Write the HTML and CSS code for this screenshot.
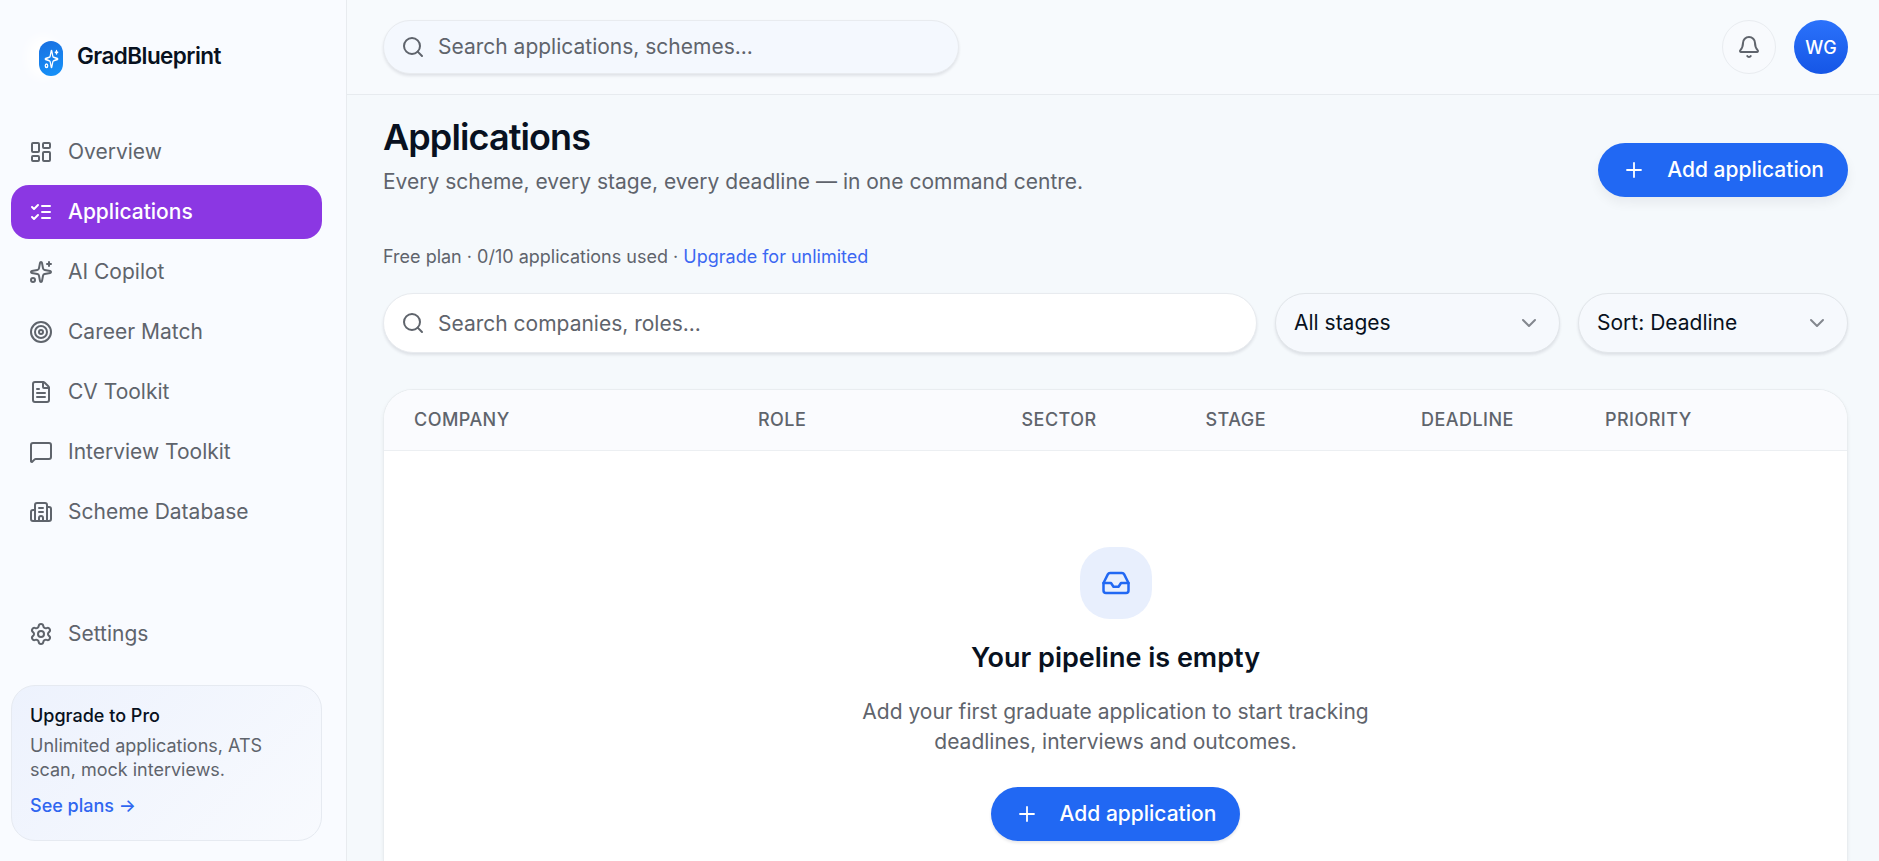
FILE: index.html
```html
<!DOCTYPE html>
<html lang="en">
<head>
    <meta charset="UTF-8">
    <meta name="viewport" content="width=device-width, initial-scale=1.0">
    <title>Applications - GradBlueprint</title>
    <link rel="stylesheet" href="styles.css">
</head>
<body>
    <aside class="sidebar">
        <a class="brand" href="#">
            <span class="brand-mark">
                <svg class="icon" viewBox="0 0 24 24" preserveAspectRatio="none"><path d="M9.937 15.5A2 2 0 0 0 8.5 14.063l-6.135-1.582a.5.5 0 0 1 0-.962L8.5 9.936A2 2 0 0 0 9.937 8.5l1.582-6.135a.5.5 0 0 1 .963 0L14.063 8.5A2 2 0 0 0 15.5 9.937l6.135 1.581a.5.5 0 0 1 0 .964L15.5 14.063a2 2 0 0 0-1.437 1.437l-1.582 6.135a.5.5 0 0 1-.963 0z"/><path d="M20 2v4M22 4h-4"/><circle cx="4" cy="20" r="2"/></svg>
            </span>
            <span class="brand-name">GradBlueprint</span>
        </a>

        <nav class="nav">
            <a href="#" class="nav-item">
                <svg class="icon" viewBox="0 0 24 24"><rect width="7" height="9" x="3" y="3" rx="1"/><rect width="7" height="5" x="14" y="3" rx="1"/><rect width="7" height="9" x="14" y="12" rx="1"/><rect width="7" height="5" x="3" y="16" rx="1"/></svg>
                <span>Overview</span>
            </a>
            <a href="#" class="nav-item active">
                <svg class="icon" viewBox="0 0 24 24"><path d="m3 17 2 2 4-4"/><path d="m3 7 2 2 4-4"/><path d="M13 6h8M13 12h8M13 18h8"/></svg>
                <span>Applications</span>
            </a>
            <a href="#" class="nav-item">
                <svg class="icon" viewBox="0 0 24 24"><path d="M11.017 2.814a1 1 0 0 1 1.966 0l1.051 5.558a2 2 0 0 0 1.594 1.594l5.558 1.051a1 1 0 0 1 0 1.966l-5.558 1.051a2 2 0 0 0-1.594 1.594l-1.051 5.558a1 1 0 0 1-1.966 0l-1.051-5.558a2 2 0 0 0-1.594-1.594l-5.558-1.051a1 1 0 0 1 0-1.966l5.558-1.051a2 2 0 0 0 1.594-1.594z"/><path d="M20 2v4M22 4h-4"/><circle cx="4" cy="20" r="2"/></svg>
                <span>AI Copilot</span>
            </a>
            <a href="#" class="nav-item">
                <svg class="icon" viewBox="0 0 24 24"><circle cx="12" cy="12" r="10"/><circle cx="12" cy="12" r="6"/><circle cx="12" cy="12" r="2"/></svg>
                <span>Career Match</span>
            </a>
            <a href="#" class="nav-item">
                <svg class="icon" viewBox="0 0 24 24"><path d="M6 22a2 2 0 0 1-2-2V4a2 2 0 0 1 2-2h8a2.4 2.4 0 0 1 1.704.706l3.588 3.588A2.4 2.4 0 0 1 20 8v12a2 2 0 0 1-2 2z"/><path d="M14 2v5a1 1 0 0 0 1 1h5"/><path d="M10 9H8M16 13H8M16 17H8"/></svg>
                <span>CV Toolkit</span>
            </a>
            <a href="#" class="nav-item">
                <svg class="icon" viewBox="0 0 24 24"><path d="M22 17a2 2 0 0 1-2 2H6.828a2 2 0 0 0-1.414.586l-2.202 2.202A.71.71 0 0 1 2 21.286V5a2 2 0 0 1 2-2h16a2 2 0 0 1 2 2z"/></svg>
                <span>Interview Toolkit</span>
            </a>
            <a href="#" class="nav-item">
                <svg class="icon" viewBox="0 0 24 24"><path d="M10 12h4M10 8h4"/><path d="M14 21v-3a2 2 0 0 0-4 0v3"/><path d="M6 10H4a2 2 0 0 0-2 2v7a2 2 0 0 0 2 2h16a2 2 0 0 0 2-2V9a2 2 0 0 0-2-2h-2"/><path d="M6 21V5a2 2 0 0 1 2-2h8a2 2 0 0 1 2 2v16"/></svg>
                <span>Scheme Database</span>
            </a>
        </nav>

        <div class="sidebar-footer">
            <a href="#" class="nav-item">
                <svg class="icon" viewBox="0 0 24 24"><path d="M9.671 4.136a2.34 2.34 0 0 1 4.659 0 2.34 2.34 0 0 0 3.319 1.915 2.34 2.34 0 0 1 2.33 4.033 2.34 2.34 0 0 0 0 3.831 2.34 2.34 0 0 1-2.33 4.033 2.34 2.34 0 0 0-3.319 1.915 2.34 2.34 0 0 1-4.659 0 2.34 2.34 0 0 0-3.32-1.915 2.34 2.34 0 0 1-2.33-4.033 2.34 2.34 0 0 0 0-3.831A2.34 2.34 0 0 1 6.35 6.051a2.34 2.34 0 0 0 3.319-1.915"/><circle cx="12" cy="12" r="3"/></svg>
                <span>Settings</span>
            </a>
            <div class="upgrade">
                <p class="upgrade-title">Upgrade to Pro</p>
                <p class="upgrade-text">Unlimited applications, ATS scan, mock interviews.</p>
                <a href="#" class="upgrade-link">See plans →</a>
            </div>
        </div>
    </aside>

    <div class="page">
        <header class="topbar">
            <label class="search search-top">
                <svg class="icon" viewBox="0 0 24 24"><circle cx="11" cy="11" r="8"/><path d="m21 21-4.34-4.34"/></svg>
                <input type="text" placeholder="Search applications, schemes...">
            </label>
            <div class="topbar-actions">
                <button class="bell" aria-label="Notifications">
                    <svg class="icon" viewBox="0 0 24 24"><path d="M10.268 21a2 2 0 0 0 3.464 0"/><path d="M3.262 15.326A1 1 0 0 0 4 17h16a1 1 0 0 0 .74-1.673C19.41 13.956 18 12.499 18 8A6 6 0 0 0 6 8c0 4.499-1.411 5.956-2.738 7.326"/></svg>
                </button>
                <div class="avatar">WG</div>
            </div>
        </header>

        <main class="content">
            <div class="heading">
                <div>
                    <h1>Applications</h1>
                    <p class="subtitle">Every scheme, every stage, every deadline — in one command centre.</p>
                </div>
                <button class="btn-primary">
                    <svg class="icon" viewBox="0 0 24 24"><path d="M5 12h14M12 5v14"/></svg>
                    <span>Add application</span>
                </button>
            </div>

            <p class="plan">Free plan · 0/10 applications used · <a href="#">Upgrade for unlimited</a></p>

            <div class="filters">
                <label class="search search-table">
                    <svg class="icon" viewBox="0 0 24 24"><circle cx="11" cy="11" r="8"/><path d="m21 21-4.34-4.34"/></svg>
                    <input type="text" placeholder="Search companies, roles...">
                </label>
                <button class="select select-stage">
                    <span>All stages</span>
                    <svg class="icon" viewBox="0 0 24 24"><path d="m6 9 6 6 6-6"/></svg>
                </button>
                <button class="select select-sort">
                    <span>Sort: Deadline</span>
                    <svg class="icon" viewBox="0 0 24 24"><path d="m6 9 6 6 6-6"/></svg>
                </button>
            </div>

            <section class="table-card">
                <div class="table-head">
                    <span>Company</span>
                    <span>Role</span>
                    <span>Sector</span>
                    <span>Stage</span>
                    <span>Deadline</span>
                    <span>Priority</span>
                </div>
                <div class="empty">
                    <div class="empty-icon">
                        <svg class="icon" viewBox="0 0 24 24"><path d="M22 12h-6l-2 3h-4l-2-3H2"/><path d="M5.45 5.11 2 12v6a2 2 0 0 0 2 2h16a2 2 0 0 0 2-2v-6l-3.45-6.89A2 2 0 0 0 16.76 4H7.24a2 2 0 0 0-1.79 1.11z"/></svg>
                    </div>
                    <h2>Your pipeline is empty</h2>
                    <p class="empty-text">Add your first graduate application to start tracking deadlines, interviews and outcomes.</p>
                    <button class="btn-primary">
                        <svg class="icon" viewBox="0 0 24 24"><path d="M5 12h14M12 5v14"/></svg>
                        <span>Add application</span>
                    </button>
                </div>
            </section>
        </main>
    </div>
</body>
</html>
```

FILE: styles.css
```css
* {
    box-sizing: border-box;
}
body {
    margin: 0;
    height: 100vh;
    display: flex;
    overflow: hidden;
    font-family: Inter, "Liberation Sans", sans-serif;
    font-size: 21px;
    color: #081120;
    background-color: #f5f9fc;
}
a {
    color: inherit;
    text-decoration: none;
}
p, h1, h2 {
    margin: 0;
}
button, input {
    font: inherit;
    color: inherit;
    border: none;
    background: none;
    padding: 0;
}
.icon {
    width: 24px;
    height: 24px;
    flex-shrink: 0;
    fill: none;
    stroke: currentColor;
    stroke-width: 2;
    stroke-linecap: round;
    stroke-linejoin: round;
}

/* Sidebar */
.sidebar {
    width: 347px;
    flex-shrink: 0;
    display: flex;
    flex-direction: column;
    padding: 20px 24px 20px 11px;
    background-color: #f9fbff;
    border-right: 1px solid #e8ebef;
}
.brand {
    display: flex;
    align-items: center;
    height: 72px;
    padding-left: 28px;
}
.brand-mark {
    width: 24px;
    height: 35px;
    margin-top: 5px;
    display: flex;
    align-items: center;
    justify-content: center;
    border-radius: 12px;
    color: white;
    background: linear-gradient(160deg, #1a6fe0, #1593fa);
    box-shadow: -8px -1px 12px 3px white;
}
.brand-mark .icon {
    width: 15px;
    height: 20px;
}
.brand-name {
    margin-left: 14px;
    padding-bottom: 1px;
    font-size: 22.5px;
    font-weight: 600;
    letter-spacing: -0.56px;
}
.nav {
    display: flex;
    flex-direction: column;
    gap: 6px;
    margin-top: 33px;
}
.nav-item {
    display: flex;
    align-items: center;
    gap: 15px;
    height: 54px;
    padding: 0 18px;
    border-radius: 18px;
    color: #5f646c;
}
.nav-item span {
    padding-bottom: 1px;
}
.nav-item.active {
    color: white;
    font-weight: 500;
    background-color: #8b37e3;
}
.sidebar-footer {
    margin-top: auto;
}
.upgrade {
    height: 156px;
    margin-top: 24px;
    padding: 18px;
    border: 1px solid #e6eaf1;
    border-radius: 24px;
    font-size: 18px;
    line-height: 24px;
    background: linear-gradient(135deg, #edf2fd, #f8fafe);
}
.upgrade-title {
    font-weight: 500;
}
.upgrade-text {
    margin-top: 6px;
    color: #5f646c;
}
.upgrade-link {
    display: block;
    margin-top: 12px;
    font-weight: 500;
    color: #2f66f0;
}

/* Top bar */
.page {
    flex: 1;
    min-width: 0;
    display: flex;
    flex-direction: column;
}
.topbar {
    height: 95px;
    flex-shrink: 0;
    display: flex;
    align-items: center;
    justify-content: space-between;
    padding: 0 31px 0 36px;
    background-color: #f7fafd;
    border-bottom: 1px solid #e7ebef;
}
.topbar-actions {
    display: flex;
    gap: 18px;
}
.search {
    display: flex;
    align-items: center;
    gap: 13px;
    padding: 0 17px;
    border: 1px solid #e8ebef;
    border-radius: 30px;
    color: #5f646c;
    box-shadow: 0 2px 3px rgba(15, 23, 42, 0.1);
}
.search input {
    flex: 1;
    min-width: 0;
    outline: none;
}
.search input::placeholder {
    color: #5f646c;
    opacity: 1;
}
.search-top {
    width: 576px;
    height: 54px;
    background-color: #f4f8fe;
}
.search-top input {
    padding-bottom: 1px;
}
.bell, .avatar {
    width: 54px;
    height: 54px;
    display: flex;
    align-items: center;
    justify-content: center;
    border-radius: 50%;
}
.bell {
    color: #5f646c;
    border: 1px solid #e9ecf0;
    background-color: #f8fafd;
}
.avatar {
    color: white;
    font-size: 18px;
    font-weight: 500;
    background: linear-gradient(#2b72fb, #1556e6);
}

/* Content */
.content {
    flex: 1;
    display: flex;
    flex-direction: column;
    padding: 18px 31px 0 36px;
}
.heading {
    display: flex;
    align-items: flex-end;
    justify-content: space-between;
}
h1 {
    font-size: 36px;
    font-weight: 600;
    line-height: 48px;
    letter-spacing: -0.9px;
}
.subtitle {
    margin-top: 6px;
    line-height: 30px;
    color: #5f646c;
}
.btn-primary {
    display: flex;
    align-items: center;
    gap: 21px;
    height: 54px;
    padding: 0 24px;
    border-radius: 27px;
    color: white;
    font-weight: 500;
    background-color: #2168f3;
    box-shadow: 0 6px 12px rgba(15, 23, 42, 0.06);
}
.btn-primary .icon {
    stroke-width: 1.8;
}
.btn-primary span {
    padding-bottom: 1px;
}
.plan {
    margin-top: 48px;
    font-size: 18px;
    line-height: 24px;
    color: #5f646c;
}
.plan a {
    color: #3b67f2;
}
.filters {
    display: flex;
    gap: 18px;
    margin-top: 24px;
}
.search-table {
    flex: 1;
    height: 60px;
    background-color: white;
}
.select {
    display: flex;
    align-items: center;
    justify-content: space-between;
    height: 60px;
    padding: 0 18px;
    border: 1px solid #e2e6ea;
    border-radius: 30px;
    background-color: #f6f9fd;
    box-shadow: 0 2px 3px rgba(15, 23, 42, 0.1);
}
.select span {
    padding-bottom: 1px;
}
.select .icon {
    color: #83878e;
}
.select-stage {
    width: 285px;
}
.select-sort {
    width: 270px;
}

/* Table */
.table-card {
    flex: 1;
    margin-top: 36px;
    border: 1px solid #e9edf0;
    border-bottom: none;
    border-radius: 30px 30px 0 0;
    overflow: hidden;
    background-color: white;
    box-shadow: 0 2px 4px rgba(15, 23, 42, 0.06);
}
.table-head {
    display: grid;
    grid-template-columns: 344px 263.5px 184px 215.5px 184px 1fr;
    align-items: center;
    height: 61px;
    padding: 0 0 1px 30px;
    font-size: 18px;
    font-weight: 500;
    text-transform: uppercase;
    letter-spacing: 0.45px;
    color: #5f646c;
    background-color: #fafbfe;
    border-bottom: 1px solid #eceff2;
}
.empty {
    display: flex;
    flex-direction: column;
    align-items: center;
    padding-top: 96px;
}
.empty-icon {
    width: 72px;
    height: 72px;
    display: flex;
    align-items: center;
    justify-content: center;
    border-radius: 30px;
    color: #2168f3;
    background-color: #e8effd;
}
.empty-icon .icon {
    width: 30px;
    height: 30px;
}
h2 {
    margin-top: 18px;
    font-size: 27px;
    font-weight: 600;
    line-height: 42px;
}
.empty-text {
    width: 540px;
    margin-top: 18px;
    line-height: 30px;
    text-align: center;
    color: #5f646c;
}
.empty .btn-primary {
    margin-top: 30px;
    box-shadow: 0 2px 3px rgba(15, 23, 42, 0.1);
}
```
